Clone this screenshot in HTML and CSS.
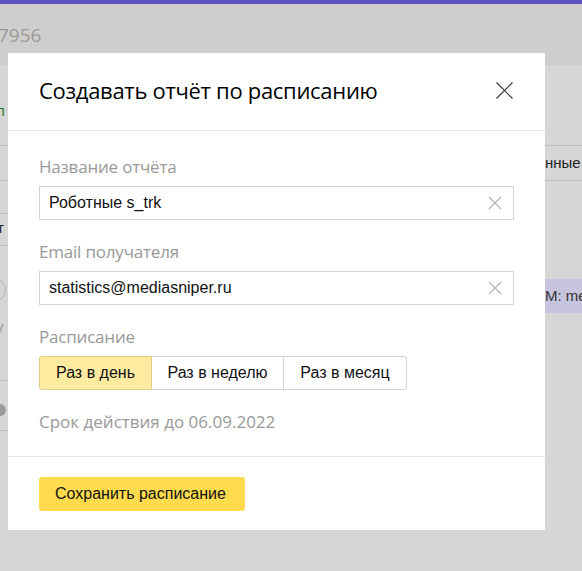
FILE: index.html
```html
<!DOCTYPE html>
<html lang="ru">
<head>
    <meta charset="UTF-8">
    <title>Отчёт по расписанию</title>
    <link rel="stylesheet" href="styles.css">
</head>
<body>
<div class="topbar"></div>
<div class="header"><span class="report-id">7956</span></div>
<div class="page">
    <div class="col-left">
        <div class="lrow lrow-1"><span class="green">л</span></div>
        <div class="lrow lrow-2"></div>
        <div class="lrow lrow-3"></div>
        <div class="lrow lrow-4">т</div>
        <div class="lrow lrow-5"><span class="circle"></span><span class="light">у</span></div>
        <div class="lrow lrow-6"><span class="dot"></span></div>
    </div>
    <div class="col-mid"></div>
    <div class="col-right">
        <div class="rrow rrow-1"></div>
        <div class="rrow rrow-2">нные</div>
        <div class="tag">М: me</div>
    </div>
</div>

<div class="modal">
    <div class="modal-head">
        <div class="modal-title">Создавать отчёт по расписанию</div>
        <div class="modal-close">
            <svg width="17" height="17" viewBox="0 0 17 17"><path d="M0.5 0.5L16.5 16.5M16.5 0.5L0.5 16.5" stroke="#3a3a3a" stroke-width="1.2" fill="none"/></svg>
        </div>
    </div>
    <div class="modal-body">
        <div class="label">Название отчёта</div>
        <div class="input">
            <span class="input-text">Роботные s_trk</span>
            <svg class="clear" width="14" height="14" viewBox="0 0 14 14"><path d="M1 1L13 13M13 1L1 13" stroke="#b3b3b3" stroke-width="1.1" fill="none"/></svg>
        </div>
        <div class="label">Email получателя</div>
        <div class="input">
            <span class="input-text">statistics@mediasniper.ru</span>
            <svg class="clear" width="14" height="14" viewBox="0 0 14 14"><path d="M1 1L13 13M13 1L1 13" stroke="#b3b3b3" stroke-width="1.1" fill="none"/></svg>
        </div>
        <div class="label">Расписание</div>
        <div class="radio-group">
            <div class="radio">Раз в день</div>
            <div class="radio">Раз в неделю</div>
            <div class="radio">Раз в месяц</div>
        </div>
        <div class="label label-last">Срок действия до 06.09.2022</div>
    </div>
    <div class="modal-foot">
        <div class="btn-save">Сохранить расписание</div>
    </div>
</div>
</body>
</html>
```

FILE: styles.css
```css
*{margin: 0;padding: 0;box-sizing: border-box;}
body{width: 582px;height: 571px;overflow: hidden;background: #d6d6d6;font-family: "Liberation Sans", Arial, sans-serif;position: relative;}

.topbar{height: 4px;background: #5e50bf;}
.header{height: 61px;background: #cfcecd;padding-top: 19px;}
.report-id{display: block;margin-left: -2px;font-family: "Open Sans", sans-serif;font-size: 19px;color: #9b9b9b;line-height: 24px;}

.page{display: grid;grid-template-columns: 8px 537px 37px;font-size: 15px;color: #222;}
.col-left{overflow: hidden;white-space: nowrap;}
.col-right{white-space: nowrap;}

.lrow{border-bottom: 1px solid #c0c0c0;line-height: 17px;}
.lrow-1{height: 81px;padding-top: 37px;}
.lrow-2{height: 35px;}
.lrow-3{height: 33px;}
.lrow-4{height: 32px;padding-top: 5px;margin-left: -3px;}
.lrow-5{height: 135px;padding-top: 32px;border-bottom: 1px solid #c0c0c0;}
.lrow-6{height: 50px;padding-top: 23px;}
.green{color: #2a7a2a;margin-left: -4px;}
.light{display: block;color: #999;margin: 16px 0 0 -4px;}
.circle{display: block;width: 24px;height: 24px;border: 1px solid #b5b5b5;border-radius: 50%;margin-left: -18px;}
.dot{display: block;width: 12px;height: 12px;border-radius: 50%;background: #9a9a9a;margin-left: -6px;}

.rrow{border-bottom: 1px solid #c0c0c0;}
.rrow-1{height: 81px;}
.rrow-2{height: 35px;padding: 8px 0 0 0;line-height: 17px;}
.tag{height: 34px;margin-top: 98px;padding: 8px 0 0 0;line-height: 17px;background: #c7c5de;color: #333;}

.modal{position: absolute;left: 8px;top: 53px;width: 537px;height: 477px;background: #fff;}
.modal-head{height: 78px;border-bottom: 1px solid #e6e6e6;display: flex;align-items: center;justify-content: space-between;padding: 0 32px 0 31px;}
.modal-title{font-family: "Open Sans", sans-serif;font-size: 22px;color: #000;letter-spacing: -0.3px;padding-bottom: 3px;}
.modal-close{width: 17px;height: 17px;margin-bottom: 2px;}
.modal-close svg{display: block;}

.modal-body{padding: 25px 31px 23px;border-bottom: 1px solid #e6e6e6;}
.label{font-family: "Open Sans", sans-serif;font-size: 17px;line-height: 22px;color: #999;letter-spacing: -0.2px;margin-bottom: 8px;}
.label-last{margin-top: 21px;margin-bottom: 0;letter-spacing: 0;}
.input{height: 34px;border: 1px solid #d4d4d4;display: flex;align-items: center;justify-content: space-between;padding: 0 11px 0 9px;margin-bottom: 21px;}
.input-text{font-size: 16px;color: #111;}
.clear{display: block;}

.radio-group{display: flex;height: 34px;}
.radio{border: 1px solid #d4d4d4;border-left: none;font-size: 16px;color: #111;display: flex;align-items: center;justify-content: center;}
.radio:first-child{border: 1px solid #e0cd8c;border-radius: 3px 0 0 3px;background: #ffeba0;width: 113px;}
.radio:nth-child(2){width: 132px;}
.radio:last-child{width: 123px;border-radius: 0 3px 3px 0;}

.modal-foot{padding: 20px 31px;}
.btn-save{display: inline-flex;align-items: center;height: 34px;width: 206px;padding: 0 16px;background: #ffdb4d;border-radius: 3px;font-size: 16px;color: #111;}
```
